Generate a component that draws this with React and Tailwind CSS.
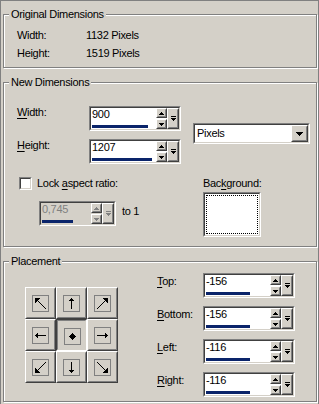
import React from "react";

function Px({ w, h, rects, color = "#000", className = "" }) {
  return (
    <svg width={w} height={h} viewBox={`0 0 ${w} ${h}`} shapeRendering="crispEdges" className={className}>
      {rects.map(([x, y, rw, rh], i) => (
        <rect key={i} x={x} y={y} width={rw} height={rh} fill={color} />
      ))}
    </svg>
  );
}

const mx = (rs) => rs.map(([x, y, w, h]) => [15 - x - w, y, w, h]);
const my = (rs) => rs.map(([x, y, w, h]) => [x, 15 - y - h, w, h]);

const NW = [
  [2, 2, 5, 1],
  [2, 3, 4, 1],
  [2, 4, 3, 1],
  [2, 5, 2, 1],
  [2, 6, 1, 1],
  ...Array.from({ length: 8 }, (_, i) => [5 + i, 5 + i, 1, 1]),
];

const ARROWS = [
  NW,
  [[7, 2, 1, 1], [6, 3, 3, 1], [5, 4, 5, 1], [7, 5, 1, 8]],
  mx(NW),
  [[2, 7, 1, 1], [3, 6, 1, 3], [4, 5, 1, 5], [5, 7, 8, 1]],
  [[7, 4, 1, 1], [6, 5, 3, 1], [5, 6, 5, 1], [4, 7, 7, 1], [5, 8, 5, 1], [6, 9, 3, 1], [7, 10, 1, 1]],
  [[2, 7, 8, 1], [10, 5, 1, 5], [11, 6, 1, 3], [12, 7, 1, 1]],
  my(NW),
  [[7, 2, 1, 8], [5, 10, 5, 1], [6, 11, 3, 1], [7, 12, 1, 1]],
  mx(my(NW)),
];

function Sunken({ className = "", inner = "", children }) {
  return (
    <div className={`border border-t-[#808080] border-l-[#808080] border-b-white border-r-white ${className}`}>
      <div className={`h-full w-full border border-t-[#404040] border-l-[#404040] border-b-[#d4d0c8] border-r-[#d4d0c8] ${inner}`}>
        {children}
      </div>
    </div>
  );
}

function Raised({ className = "", children }) {
  return (
    <div className={`border border-t-white border-l-white border-b-[#404040] border-r-[#404040] bg-[#d4d0c8] ${className}`}>
      <div className="h-full w-full border border-t-[#d4d0c8] border-l-[#d4d0c8] border-b-[#808080] border-r-[#808080] flex items-center justify-center">
        {children}
      </div>
    </div>
  );
}

function Spin({ value, bar, disabled = false, className = "w-[92px]" }) {
  const c = disabled ? "#808080" : "#000";
  return (
    <Sunken className={`h-[25px] ${className}`} inner={`flex ${disabled ? "bg-[#d4d0c8]" : "bg-white"}`}>
      <div className={`flex-1 flex flex-col justify-between ${disabled ? "text-[#808080]" : "text-black"}`}>
        <div className="pl-px leading-[13px]">{value}</div>
        <div className="ml-px mb-px h-[3px] bg-[#0a246a]" style={{ width: bar }} />
      </div>
      <div className="ml-px flex flex-col gap-px">
        <Raised className="w-[11px] h-[10px]">
          <Px w={5} h={3} color={c} rects={[[2, 0, 1, 1], [1, 1, 3, 1], [0, 2, 5, 1]]} />
        </Raised>
        <Raised className="w-[11px] h-[10px]">
          <Px w={5} h={3} color={c} rects={[[0, 0, 5, 1], [1, 1, 3, 1], [2, 2, 1, 1]]} />
        </Raised>
      </div>
      <Raised className="w-[12px] h-full">
        <Px w={5} h={5} color={c} rects={[[0, 0, 5, 1], [0, 2, 5, 1], [1, 3, 3, 1], [2, 4, 1, 1]]} />
      </Raised>
    </Sunken>
  );
}

function Group({ title, className = "", children }) {
  return (
    <div className={`relative w-[314px] border border-[#808080] shadow-[inset_1px_1px_0_#fff,1px_1px_0_#fff] ${className}`}>
      <span className="absolute left-[5px] top-[-7px] px-[2px] bg-[#d4d0c8] leading-[13px]">{title}</span>
      {children}
    </div>
  );
}

function U({ children }) {
  return <span className="underline underline-offset-[2px]">{children}</span>;
}

export default function App() {
  return (
    <div className="w-[319px] h-[404px] overflow-hidden bg-[#d4d0c8] border-t border-l border-r border-[#808080] pt-[13px] pl-[2px] font-['Liberation_Sans',Arial,sans-serif] text-[11px] leading-[13px] tracking-[-0.3px] text-black">
      <Group title="Original Dimensions" className="h-[54px] pt-[11px] pl-[13px]">
        <div className="flex leading-[18px]">
          <div className="w-[69px]">Width:</div>
          <div>1132 Pixels</div>
        </div>
        <div className="flex leading-[18px]">
          <div className="w-[69px]">Height:</div>
          <div>1519 Pixels</div>
        </div>
      </Group>

      <Group title="New Dimensions" className="mt-[14px] h-[165px] pt-[23px] pl-[13px]">
        <div className="flex items-start">
          <div className="flex flex-col gap-[8px]">
            <div className="flex items-start">
              <div className="w-[72px]">
                <U>W</U>idth:
              </div>
              <Spin value="900" bar={56} />
            </div>
            <div className="flex items-start">
              <div className="w-[72px]">
                <U>H</U>eight:
              </div>
              <Spin value="1207" bar={60} />
            </div>
          </div>
          <div className="ml-[12px] mt-[17px]">
            <Sunken className="w-[117px] h-[21px]" inner="bg-white flex">
              <div className="flex-1 pl-[2px] leading-[17px]">Pixels</div>
              <Raised className="w-[17px] h-full">
                <Px w={7} h={4} rects={[[0, 0, 7, 1], [1, 1, 5, 1], [2, 2, 3, 1], [3, 3, 1, 1]]} />
              </Raised>
            </Sunken>
          </div>
        </div>

        <div className="flex mt-[13px]">
          <div className="w-[186px]">
            <div className="flex items-center ml-[2px] h-[13px]">
              <Sunken className="w-[13px] h-[13px]" inner="bg-white" />
              <span className="ml-[5px]">
                Lock <U>a</U>spect ratio:
              </span>
            </div>
            <div className="flex items-start ml-[22px] mt-[11px]">
              <Spin value="0,745" bar={31} disabled className="w-[77px]" />
              <span className="ml-[6px] mt-[4px]">to 1</span>
            </div>
          </div>
          <div>
            <div>
              Bac<U>k</U>ground:
            </div>
            <Sunken className="mt-[2px] w-[58px] h-[45px]" inner="bg-white p-px">
              <div className="h-full w-full border border-dotted border-black" />
            </Sunken>
          </div>
        </div>
      </Group>

      <Group title="Placement" className="mt-[14px] h-[141px]">
        <div className="flex items-start pl-[21px] pt-[11px]">
          <div className="mt-[14px] grid grid-cols-[repeat(3,31px)] grid-rows-[repeat(3,32px)]">
            {ARROWS.map((rects, i) =>
              i === 4 ? (
                <div
                  key={i}
                  className="border border-t-[#404040] border-l-[#404040] border-b-white border-r-white bg-[#d4d0c8]"
                >
                  <div className="h-full w-full border border-t-[#808080] border-l-[#808080] border-b-[#d4d0c8] border-r-[#d4d0c8] flex items-center justify-center">
                    <div className="translate-x-px translate-y-px border border-[#808080]">
                      <Px w={15} h={15} rects={rects} />
                    </div>
                  </div>
                </div>
              ) : (
                <Raised key={i}>
                  <div className="border border-[#808080]">
                    <Px w={15} h={15} rects={rects} />
                  </div>
                </Raised>
              )
            )}
          </div>
          <div className="ml-[39px] flex flex-col gap-[8px]">
            {[
              ["T", "op:"],
              ["B", "ottom:"],
              ["L", "eft:"],
              ["R", "ight:"],
            ].map(([k, rest], i) => (
              <div key={k} className="flex items-start">
                <div className="w-[46px] mt-[2px]">
                  <U>{k}</U>
                  {rest}
                </div>
                <Spin value={i < 2 ? "-156" : "-116"} bar={44} />
              </div>
            ))}
          </div>
        </div>
      </Group>
    </div>
  );
}
